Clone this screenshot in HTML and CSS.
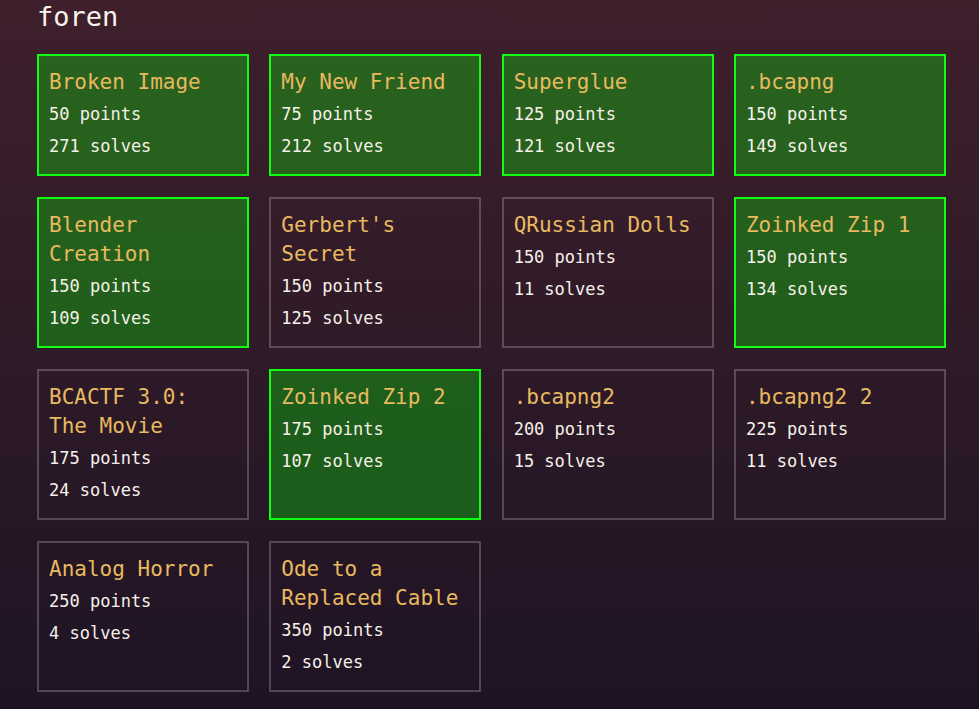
FILE: index.html
```html
<!DOCTYPE html>
<html lang="en">
<head>
<meta charset="utf-8">
<title>foren</title>
<link rel="stylesheet" href="styles.css">
</head>
<body>
<main class="page">
  <h1 class="category">foren</h1>
  <div class="grid">
    <div class="card solved"><div class="name">Broken Image</div><div class="stat">50 points</div><div class="stat">271 solves</div></div>
    <div class="card solved"><div class="name">My New Friend</div><div class="stat">75 points</div><div class="stat">212 solves</div></div>
    <div class="card solved"><div class="name">Superglue</div><div class="stat">125 points</div><div class="stat">121 solves</div></div>
    <div class="card solved"><div class="name">.bcapng</div><div class="stat">150 points</div><div class="stat">149 solves</div></div>
    <div class="card solved"><div class="name">Blender Creation</div><div class="stat">150 points</div><div class="stat">109 solves</div></div>
    <div class="card"><div class="name">Gerbert's Secret</div><div class="stat">150 points</div><div class="stat">125 solves</div></div>
    <div class="card"><div class="name">QRussian Dolls</div><div class="stat">150 points</div><div class="stat">11 solves</div></div>
    <div class="card solved"><div class="name">Zoinked Zip 1</div><div class="stat">150 points</div><div class="stat">134 solves</div></div>
    <div class="card"><div class="name">BCACTF 3.0: The Movie</div><div class="stat">175 points</div><div class="stat">24 solves</div></div>
    <div class="card solved"><div class="name">Zoinked Zip 2</div><div class="stat">175 points</div><div class="stat">107 solves</div></div>
    <div class="card"><div class="name">.bcapng2</div><div class="stat">200 points</div><div class="stat">15 solves</div></div>
    <div class="card"><div class="name">.bcapng2 2</div><div class="stat">225 points</div><div class="stat">11 solves</div></div>
    <div class="card"><div class="name">Analog Horror</div><div class="stat">250 points</div><div class="stat">4 solves</div></div>
    <div class="card"><div class="name">Ode to a Replaced Cable</div><div class="stat">350 points</div><div class="stat">2 solves</div></div>
  </div>
</main>
</body>
</html>
```
FILE: styles.css
```css
html, body {
  margin: 0;
  padding: 0;
  height: 100%;
}
body {
  background: linear-gradient(180deg, #3f1f2c 0%, #2e1a28 50%, #1e1324 100%);
  color: #f6f1e9;
  font-family: "DejaVu Sans Mono", "Liberation Mono", monospace;
  overflow: hidden;
}
.page {
  padding: 2px 37px 0 37px;
}
.category {
  margin: 0 0 22px 0;
  font-size: 27px;
  line-height: 30px;
  font-weight: normal;
  color: #f8f4ec;
}
.grid {
  display: grid;
  width: 909px;
  grid-template-columns: repeat(4, 1fr);
  column-gap: 20.3px;
  row-gap: 21px;
}
.card {
  border: 2px solid rgba(255, 255, 255, 0.22);
  padding: 12px 10px 12px 10px;
}
.card.solved {
  background: rgba(0, 255, 0, 0.3);
  border-color: #10ff10;
}
.name {
  font-size: 21px;
  line-height: 29px;
  color: #e8b95f;
  margin-bottom: 1px;
}
.stat {
  font-size: 17px;
  line-height: 32px;
  color: #f6f1e9;
}
```
